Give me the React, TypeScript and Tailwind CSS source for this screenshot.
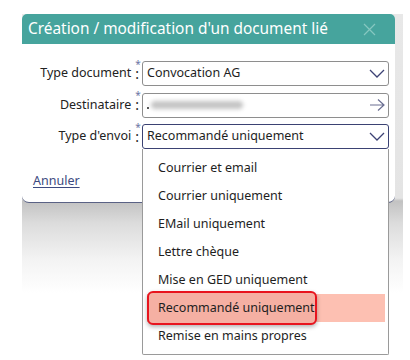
import React from "react";

const Chevron = () => (
  <svg width="16" height="9" viewBox="0 0 16 9" className="shrink-0">
    <path d="M1 1 L8 8 L15 1" fill="none" stroke="#3d4275" strokeWidth="1.3" />
  </svg>
);

const Arrow = () => (
  <svg width="16" height="12" viewBox="0 0 16 12" className="shrink-0">
    <path d="M1 6 H15 M9 0.5 L15 6 L9 11.5" fill="none" stroke="#6b6f92" strokeWidth="1.2" />
  </svg>
);

const Label = ({ text }: { text: string }) => (
  <div className="w-[119px] pr-[2px] flex justify-end items-center text-[12.5px] text-[#222]">
    <span>{text}</span>
    <span className="relative ml-[4px] text-[14px] leading-none">
      :
      <span className="absolute -top-[8px] left-[0px] text-[10px] text-[#6c74a4]">*</span>
    </span>
  </div>
);

const items = [
  "Courrier et email",
  "Courrier uniquement",
  "EMail uniquement",
  "Lettre chèque",
  "Mise en GED uniquement",
  "Recommandé uniquement",
  "Remise en mains propres",
];

export default function App() {
  return (
    <div className="w-[410px] h-[360px] bg-white relative overflow-hidden font-['Noto_Sans',sans-serif]">
      <div className="ml-[22px] mt-[14px] w-[381px] pb-[90px] bg-[linear-gradient(to_bottom,#e8e8e8_0%,#e4e4e4_66%,#c2c2c2_67%,#dcdcdc_75%,#f3f3f3_88%,#ffffff_100%)]">
        <div className="w-[373px] bg-white rounded-t-[5px] rounded-b-[7px] border-b border-[#5a6285] overflow-hidden">
          <div className="h-[30px] bg-[#46a49d] flex items-center justify-between pl-[6px] pr-[19px]">
            <span className="text-white text-[15.4px]">Création / modification d'un document lié</span>
            <svg width="13" height="13" viewBox="0 0 13 13">
              <path d="M1 1 L12 12 M12 1 L1 12" stroke="#86c7c0" strokeWidth="1.2" />
            </svg>
          </div>
          <div className="pt-[17px] pb-[11px] flex flex-col gap-[6.5px]">
            <div className="flex items-center gap-[1px]">
              <Label text="Type document" />
              <div className="w-[247px] h-[25px] border border-[#8e8e8e] rounded-[3px] flex items-center justify-between pl-[4px] pr-[3px] text-[12.5px] text-[#1e1e1e]">
                <span>Convocation AG</span>
                <Chevron />
              </div>
            </div>
            <div className="flex items-center gap-[1px]">
              <Label text="Destinataire" />
              <div className="w-[247px] h-[25px] border border-[#8e8e8e] rounded-[3px] flex items-center justify-between pl-[4px] pr-[3px] text-[12.5px]">
                <div className="flex items-center">
                  <span className="w-[2px] h-[2px] bg-[#555] mt-[6px]"></span>
                  <span className="ml-[2px] w-[92px] h-[8px] bg-[#c4c4c4] blur-[2px] rounded-full"></span>
                </div>
                <Arrow />
              </div>
            </div>
            <div className="flex items-center gap-[1px]">
              <Label text="Type d'envoi" />
              <div className="w-[247px] h-[25px] border border-[#3b4273] rounded-[3px] flex items-center justify-between pl-[4px] pr-[3px] text-[12.5px] text-[#1e1e1e]">
                <span>Recommandé uniquement</span>
                <Chevron />
              </div>
            </div>
            <div className="mt-[11px] pl-[11px]">
              <span className="text-[12.5px] text-[#3c4a80] underline underline-offset-2">Annuler</span>
            </div>
          </div>
        </div>
      </div>
      <div className="absolute left-[142px] top-[149px] w-[247px] bg-white border border-[#9a9a9a] border-t-0 rounded-b-[2px] pt-[5px] pb-[4px] pl-[4px] pr-[3px] text-[12.5px] text-[#1e1e1e]">
        {items.map((it) => {
          const sel = it === "Recommandé uniquement";
          return (
            <div key={it} className={"relative h-[28px] flex items-center pl-[11px] " + (sel ? "bg-[#fdc0b2]" : "")}>
              {sel && (
                <div className="absolute left-0 -top-[3px] w-[170px] h-[34px] rounded-[6px] border-2 border-[#e8141e] bg-[#f5b0a3] shadow-[0_2px_4px_rgba(0,0,0,0.3)]"></div>
              )}
              <span className="relative">{it}</span>
            </div>
          );
        })}
      </div>
    </div>
  );
}
